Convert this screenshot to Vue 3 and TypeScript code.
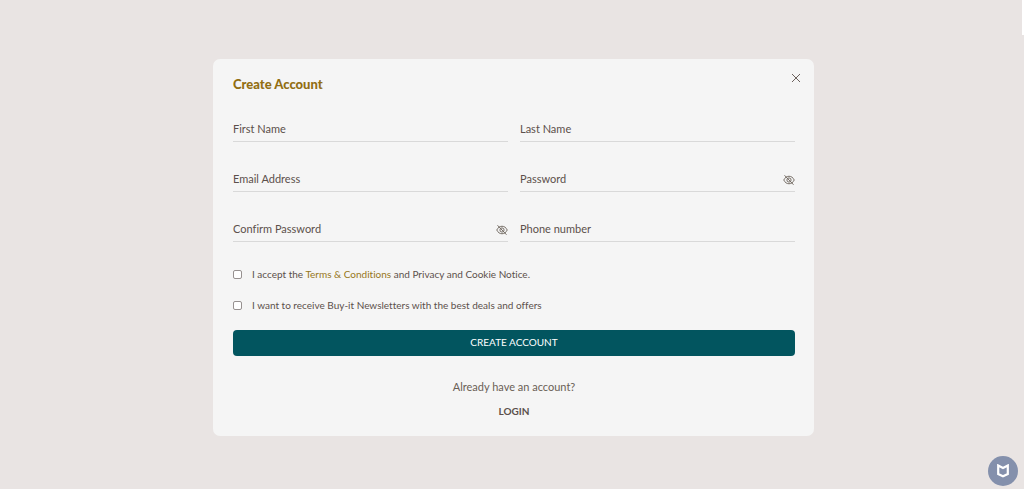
<script setup lang="ts">
import { reactive, ref } from 'vue'

interface Field {
  id: string
  label: string
  type: 'text' | 'email' | 'password' | 'tel'
}

const fields: Field[] = [
  { id: 'first-name', label: 'First Name', type: 'text' },
  { id: 'last-name', label: 'Last Name', type: 'text' },
  { id: 'email', label: 'Email Address', type: 'email' },
  { id: 'password', label: 'Password', type: 'password' },
  { id: 'confirm-password', label: 'Confirm Password', type: 'password' },
  { id: 'phone', label: 'Phone number', type: 'tel' },
]

const values = reactive<Record<string, string>>({})
const shown = reactive<Record<string, boolean>>({})
const acceptTerms = ref(false)
const newsletter = ref(false)
const open = ref(true)
</script>

<template>
  <div class="page">
    <main v-if="open" class="card">
      <button class="close" type="button" aria-label="Close" @click="open = false">
        <svg viewBox="0 0 10 10" width="10" height="10">
          <path d="M1 1 9 9M9 1 1 9" fill="none" stroke="currentColor" stroke-width="0.9" />
        </svg>
      </button>
      <h1>Create Account</h1>
      <form @submit.prevent>
        <div class="fields">
          <div v-for="f in fields" :key="f.id" class="field">
            <label v-show="!values[f.id]" :for="f.id">{{ f.label }}</label>
            <input
              :id="f.id"
              v-model="values[f.id]"
              :type="f.type === 'password' && shown[f.id] ? 'text' : f.type"
            />
            <button
              v-if="f.type === 'password'"
              class="eye"
              type="button"
              aria-label="Show password"
              @click="shown[f.id] = !shown[f.id]"
            >
              <svg viewBox="0 0 24 24" width="12" height="12" fill="none" stroke="currentColor" stroke-width="1.9">
                <path d="M1.5 12C4 7 7.500 4.500 12 4.500S20 7 22.500 12C20 17 16.500 19.500 12 19.500S4 17 1.500 12Z" />
                <circle cx="12" cy="12" r="4.200" />
                <path d="M3 2.500 21 21.500" />
              </svg>
            </button>
          </div>
        </div>
        <div class="checks">
          <div class="check">
            <input id="terms" v-model="acceptTerms" type="checkbox" />
            <label for="terms">I accept the <a href="#terms">Terms &amp; Conditions</a> and Privacy and Cookie Notice.</label>
          </div>
          <div class="check">
            <input id="news" v-model="newsletter" type="checkbox" />
            <label for="news">I want to receive Buy-it Newsletters with the best deals and offers</label>
          </div>
        </div>
        <button class="submit" type="submit">CREATE ACCOUNT</button>
      </form>
      <div class="signin">
        <p>Already have an account?</p>
        <a href="#login">LOGIN</a>
      </div>
    </main>
    <div class="scroll-thumb"></div>
    <button class="badge" type="button" aria-label="Security">
      <svg viewBox="0 0 12 14" width="12" height="14">
        <path d="M1.200 1.500 6 4 10.800 1.500V10L6 12.300 1.200 10Z" fill="none" stroke="currentColor" stroke-width="2.200" />
      </svg>
    </button>
  </div>
</template>

<style>
body {
  margin: 0;
  background: #e9e4e3;
}
</style>

<style scoped>
.page {
  box-sizing: border-box;
  min-height: 100vh;
  padding: 59px 0 52px 3px;
  background: #e9e4e3;
  color: #5c504b;
  font-family: Lato, "Liberation Sans", sans-serif;
  font-size: 11px;
  font-variant-ligatures: none;
  line-height: 16px;
}
.card {
  position: relative;
  box-sizing: border-box;
  width: 100%;
  max-width: 601px;
  margin: 0 auto;
  padding: 16px 19px 17px 20px;
  border-radius: 7px;
  background: #f5f5f5;
}
button {
  border: 0;
  padding: 0;
  background: none;
  color: inherit;
  font: inherit;
  cursor: pointer;
}
svg {
  display: block;
}
.close {
  position: absolute;
  top: 14px;
  right: 13px;
}
h1 {
  margin: 0 0 21px;
  color: #926e12;
  font-size: 13px;
  font-weight: 900;
  line-height: 18px;
}
.fields {
  display: grid;
  grid-template-columns: 1fr 1fr;
  gap: 22px 12px;
}
.field {
  display: grid;
  grid-template-columns: 1fr auto;
  align-items: center;
  box-sizing: border-box;
  height: 28px;
  border-bottom: 1px solid #d9d9d9;
}
.field label {
  grid-area: 1 / 1;
  padding-top: 2px;
  pointer-events: none;
}
.field input {
  grid-area: 1 / 1;
  box-sizing: border-box;
  width: 100%;
  height: 27px;
  border: 0;
  padding: 0;
  background: transparent;
  color: inherit;
  font: inherit;
  outline: none;
}
.eye {
  grid-area: 1 / 2;
  padding-top: 4px;
  color: #70675f;
}
.checks {
  display: grid;
  gap: 15px;
  margin: 24px 0 17px;
}
.check {
  display: flex;
  align-items: center;
  gap: 10px;
}
.check input {
  appearance: none;
  box-sizing: border-box;
  width: 9px;
  height: 9px;
  margin: 0;
  border: 1px solid #979190;
  border-radius: 2px;
  background: #fff;
}
.check input:checked {
  background: #02555f;
}
.check label {
  font-size: 10px;
}
a {
  color: #977720;
  text-decoration: none;
}
.submit {
  display: block;
  width: 100%;
  height: 26px;
  padding-bottom: 2px;
  border-radius: 4px;
  background: #02555f;
  color: #fff;
  font-size: 10px;
}
.signin {
  margin-top: 23px;
  text-align: center;
}
.signin p {
  margin: 0 0 8px;
  color: #6a6056;
}
.signin a {
  display: block;
  color: #5c504b;
  font-size: 10px;
  font-weight: 700;
}
.scroll-thumb {
  position: fixed;
  top: 0;
  right: 0;
  width: 2px;
  height: 35px;
  background: #fff;
}
.badge {
  position: fixed;
  right: 6px;
  bottom: 3px;
  display: grid;
  place-items: center;
  width: 30px;
  height: 30px;
  border-radius: 50%;
  background: #8490ac;
  color: #fff;
}
</style>
